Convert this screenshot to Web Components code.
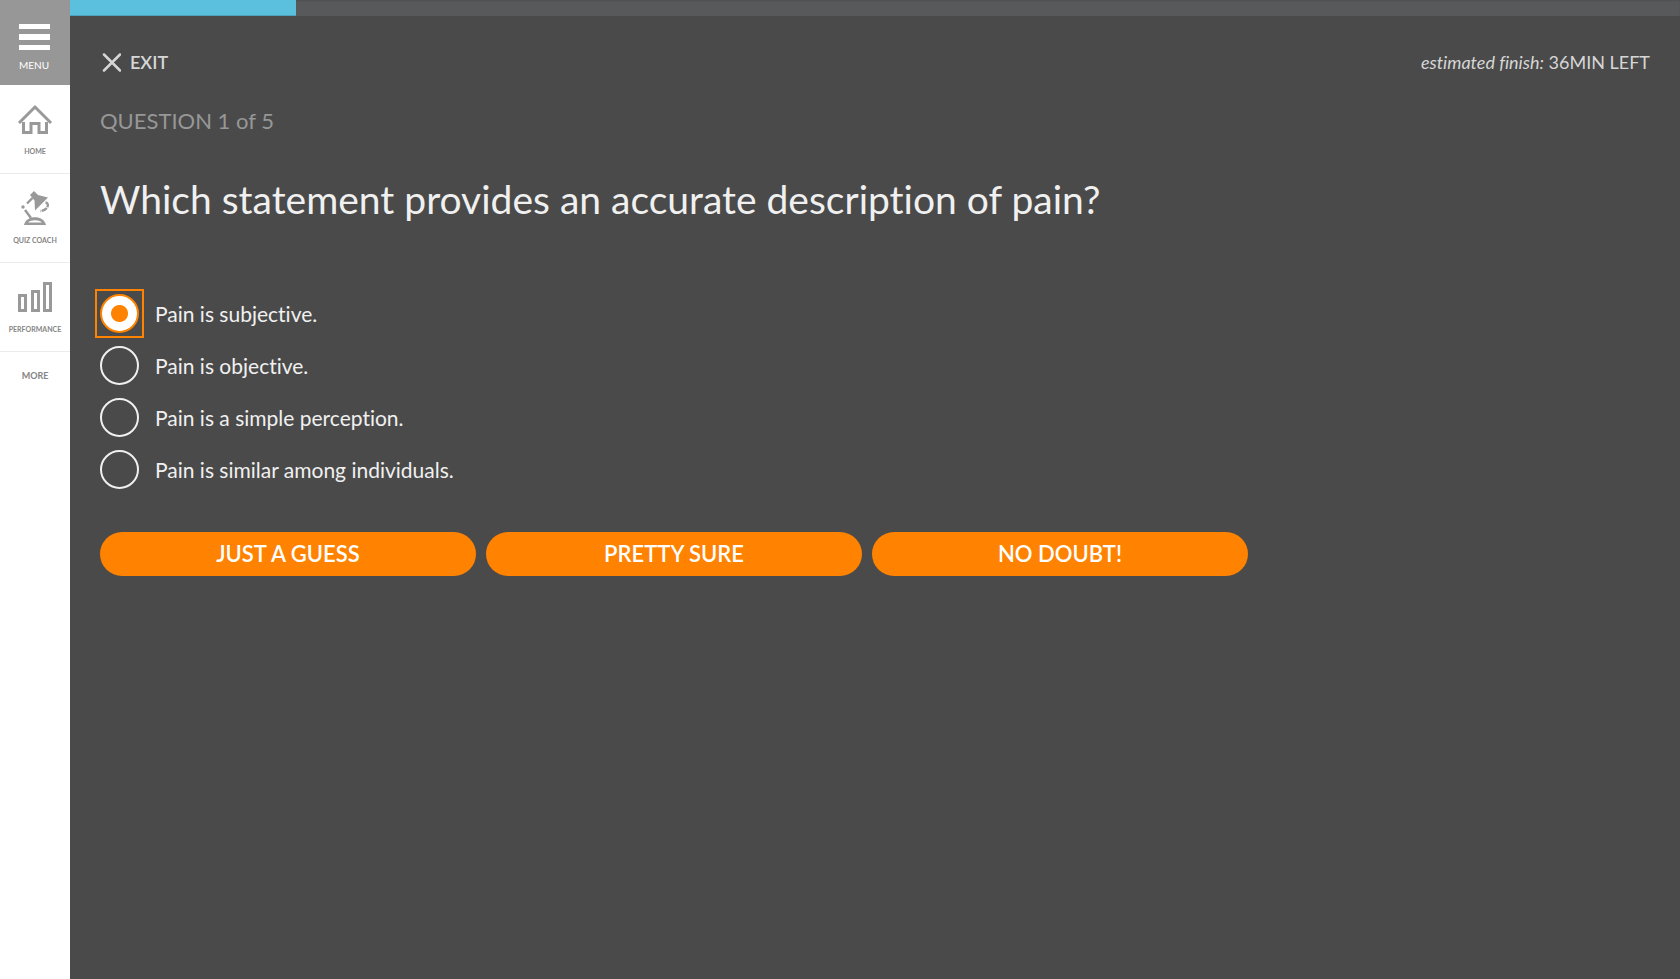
<!DOCTYPE html>
<html lang="en">
<head>
<meta charset="utf-8">
<title>Quiz</title>
<style>
  body { margin: 0; font-family: Lato, "Open Sans", sans-serif; font-variant-ligatures: none; background: #4a4a4a; }
</style>
</head>
<body>
<quiz-app></quiz-app>
<script>
const define = (name, markup, setup) => {
  const template = document.createElement('template');
  template.innerHTML = markup;
  customElements.define(name, class extends HTMLElement {
    connectedCallback() {
      if (this.shadowRoot) return;
      this.attachShadow({ mode: 'open' }).append(template.content.cloneNode(true));
      if (setup) setup(this, this.shadowRoot);
    }
  });
};

define('nav-item', `
  <style>
    :host { display: block; border-bottom: 1px solid #ececec; }
    :host([plain]) { border: 0; }
    a { display: flex; flex-direction: column; align-items: center; box-sizing: border-box; height: 88px;
        padding-top: 19px; gap: 8px; color: #858585; text-decoration: none; text-transform: uppercase;
        font-size: 7px; line-height: 10px; font-weight: 700; white-space: nowrap; }
    :host([plain]) a { height: 50px; padding-top: 19px; font-size: 9px; }
  </style>
  <a href="#"><slot name="icon"></slot><span><slot></slot></span></a>`);

define('side-bar', `
  <style>
    :host { display: block; background: #fff; }
    button { display: flex; flex-direction: column; align-items: center; gap: 8px; width: 100%; height: 85px;
             padding: 24px 2px 0 0; border: 0; background: #979797; color: #fff; font: 10px/14px Lato, sans-serif; }
    svg { display: block; overflow: visible; }
  </style>
  <button type="button">
    <svg width="31" height="26" viewBox="0 0 31 26" fill="#fff" aria-hidden="true"><path d="M0 0h31v5H0zM0 10h31v6H0zM0 21h31v5H0z"/></svg>
    <span>MENU</span>
  </button>
  <nav>
    <nav-item>
      <svg slot="icon" width="36" height="34" viewBox="0 0 36 34" fill="none" stroke="#999" stroke-width="3" aria-hidden="true">
        <path d="M2 19L18 3L34 19"/><path d="M6.500 18V28.500H14V19.500H22V28.500H29.500V18"/>
      </svg>Home</nav-item>
    <nav-item>
      <svg slot="icon" width="36" height="34" viewBox="0 0 36 34" aria-hidden="true">
        <path fill="#999" d="M13 2L17 -2L21 2L31 4.500L18 17.500L17.500 7.500Z"/>
        <path fill="none" stroke="#999" stroke-width="2.400" d="M15.500 5L10 10.500M8 17L14 25"/>
        <path fill="none" stroke="#999" stroke-width="2.400" stroke-dasharray="6 1" d="M28.500 9.500C33 10 31 18 23 18"/>
        <circle cx="6" cy="14" r="1.700" fill="#999"/>
        <path fill="#999" fill-rule="evenodd" d="M7 32C9 21.500 27 21.500 29 32ZM11 29.500H25C22 26.500 14 26.500 11 29.500Z"/>
      </svg>Quiz Coach</nav-item>
    <nav-item>
      <svg slot="icon" width="36" height="34" viewBox="0 0 36 34" fill="none" stroke="#999" stroke-width="3" aria-hidden="true">
        <path d="M2.500 13.500h6v15h-6zM15.500 9.500h6v19h-6zM27.500 1.500h6v27h-6z"/>
      </svg>Performance</nav-item>
    <nav-item plain>More</nav-item>
  </nav>`);

define('progress-track', `
  <style>
    :host { display: block; height: 16px; background: #58595b; box-shadow: inset 0 1px 2px rgba(0,0,0,.1); }
    div { width: 14.04%; height: 100%; background: #5bc0de; box-shadow: inset 0 -1px 0 rgba(0,0,0,.15); }
  </style>
  <div role="progressbar" aria-label="Quiz progress" aria-valuenow="14"></div>`);

define('quiz-header', `
  <style>
    :host { display: flex; justify-content: space-between; align-items: center; height: 28px; color: #d6d6d6; font-size: 18px; line-height: 28px; }
    button { display: flex; align-items: center; gap: 9px; padding: 0 0 0 2px; border: 0; background: none;
             color: inherit; font: 600 18px/28px Lato, sans-serif; }
  </style>
  <button type="button">
    <svg width="19" height="19" viewBox="0 0 19 19" stroke="#d6d6d6" stroke-width="2.500" stroke-linecap="round" aria-hidden="true"><path d="M2 1.500l16 16M18 1.500l-16 16"/></svg>
    <span>EXIT</span>
  </button>
  <div><em>estimated finish:</em> 36MIN LEFT</div>`);

define('answer-list', `
  <style>
    :host { display: block; color: #f0f0f0; font-size: 21px; line-height: 28px; }
    fieldset { display: grid; gap: 13px; margin: 0; padding: 0; border: 0; justify-items: start; }
    label { display: flex; align-items: center; gap: 16px; }
    input { display: block; appearance: none; box-sizing: border-box; width: 39px; height: 39px; margin: 0; border: 2px solid #f0f0f0; border-radius: 50%; }
    input:checked { border-color: #ff8200; background: radial-gradient(circle, #ff8200 8px, #fff 9px); }
    .box:has(:checked) { outline: 2px solid #ff8200; outline-offset: 3px; }
  </style>
  <fieldset aria-label="Answers"></fieldset>`, (host, root) => {
  const answers = ['Pain is subjective.', 'Pain is objective.', 'Pain is a simple perception.', 'Pain is similar among individuals.'];
  root.querySelector('fieldset').innerHTML = answers.map((text, i) =>
    `<label><span class="box"><input type="radio" name="answer"${i ? '' : ' checked'}></span><span>${text}</span></label>`).join('');
});

define('confidence-button', `
  <style>
    :host { display: block; flex: 1; }
    button { width: 100%; height: 44px; padding: 0; border: 0; border-radius: 22px; background: #ff8200; color: #fff; font: 600 22px/28px Lato, sans-serif; }
  </style>
  <button type="button"><slot></slot></button>`);

define('quiz-app', `
  <style>
    :host { display: grid; grid-template-columns: 70px 1fr; min-height: 100vh; }
    main { padding: 32px 30px; }
    .count { margin: 31px 0 0; color: #979797; font-size: 22px; line-height: 28px; }
    h1 { margin: 39px 0 0; color: #f0f0f0; font-size: 39px; line-height: 50px; font-weight: 400; }
    answer-list { margin-top: 70px; }
    .actions { display: flex; gap: 10px; max-width: 1148px; margin-top: 43px; }
  </style>
  <side-bar></side-bar>
  <div>
    <progress-track></progress-track>
    <main>
      <quiz-header></quiz-header>
      <p class="count">QUESTION 1 of 5</p>
      <h1>Which statement provides an accurate description of pain?</h1>
      <answer-list></answer-list>
      <div class="actions">
        <confidence-button>JUST A GUESS</confidence-button>
        <confidence-button>PRETTY SURE</confidence-button>
        <confidence-button>NO DOUBT!</confidence-button>
      </div>
    </main>
  </div>`);
</script>
</body>
</html>
